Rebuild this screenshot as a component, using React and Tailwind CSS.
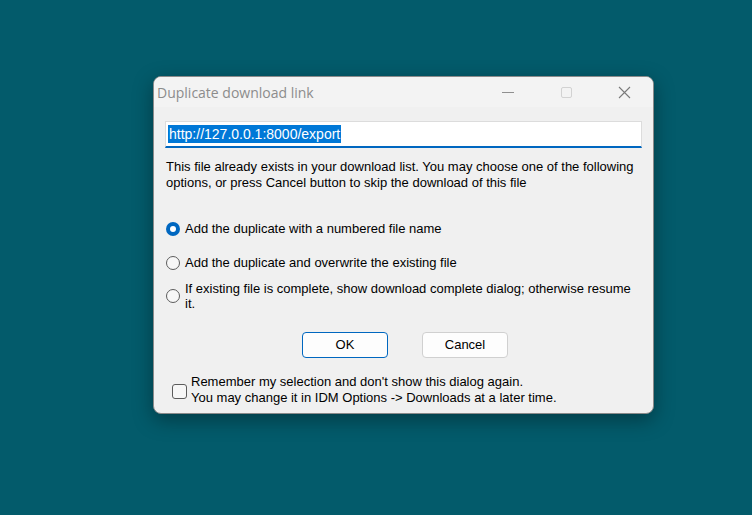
import { useState } from 'react';

const Radio = ({ checked, onClick }) => (
  <span
    onClick={onClick}
    className={
      checked
        ? "shrink-0 w-[14px] h-[14px] rounded-full bg-[#0067c0] flex items-center justify-center"
        : "shrink-0 w-[14px] h-[14px] rounded-full border border-[#5c5c5c] bg-[#f7f7f7]"
    }
  >
    {checked && <span className="w-[6px] h-[6px] rounded-full bg-white" />}
  </span>
);

const options = [
  "Add the duplicate with a numbered file name",
  "Add the duplicate and overwrite the existing file",
  "If existing file is complete, show download complete dialog; otherwise resume it.",
];

export default function App() {
  const [choice, setChoice] = useState(0);
  const [remember, setRemember] = useState(false);

  return (
    <div className="w-[752px] h-[515px] bg-[#035b6b] pt-[76px] pl-[153px] font-['Liberation_Sans',Arial,sans-serif]">
      <div className="w-[501px] h-[338px] rounded-[8px] border border-[#8a8a8a] bg-[#f0f0f0] overflow-hidden shadow-[0_6px_20px_rgba(0,0,0,0.35)] flex flex-col">
        {/* title bar */}
        <div className="h-[30px] bg-[#f3f3f3] flex items-center shrink-0">
          <span className="pl-[3px] text-[14px] text-[#8c8c8c] font-['Open_Sans',sans-serif] flex-1">
            Duplicate download link
          </span>
          <div className="flex items-center h-full">
            <div className="w-[58px] h-full flex items-center justify-center">
              <span className="w-[12px] h-px bg-[#8f8f8f]" />
            </div>
            <div className="w-[58px] h-full flex items-center justify-center">
              <span className="w-[11px] h-[11px] border border-[#d2d2d2] rounded-[2px]" />
            </div>
            <div className="w-[58px] h-full flex items-center justify-center">
              <svg width="13" height="13" viewBox="0 0 13 13">
                <path d="M1 1 L12 12 M12 1 L1 12" stroke="#7a7a7a" strokeWidth="1.1" />
              </svg>
            </div>
          </div>
        </div>

        {/* body */}
        <div className="px-[11px] pt-[14px] flex flex-col text-[13px] text-black">
          <div className="h-[27px] bg-white border border-[#dcdcdc] border-b-2 border-b-[#0067c0] flex items-center px-[2px]">
            <span className="bg-[#0078d7] text-white text-[14px] leading-[18px] px-px">
              http://127.0.0.1:8000/export
            </span>
          </div>

          <p className="mt-[11px] leading-[16px] pl-px pr-[4px]">
            This file already exists in your download list. You may choose one of the following options, or press Cancel button to skip the download of this file
          </p>

          <div className="mt-[30px] flex flex-col">
            {options.map((label, i) => (
              <label
                key={i}
                onClick={() => setChoice(i)}
                className={
                  "flex items-center gap-[5px] pl-px leading-[15px] " +
                  (i === 0 ? "" : i === 1 ? "mt-[19px]" : "mt-[11px]")
                }
              >
                <Radio checked={choice === i} />
                <span className="pr-[8px]">{label}</span>
              </label>
            ))}
          </div>

          <div className="mt-[21px] flex justify-center gap-[34px] pl-[3px]">
            <button className="w-[86px] h-[26px] rounded-[4px] border border-[#0067c0] bg-[#fdfdfd] text-[13px]">
              OK
            </button>
            <button className="w-[86px] h-[26px] rounded-[4px] border border-[#d0d0d0] bg-[#fdfdfd] text-[13px]">
              Cancel
            </button>
          </div>

          <label
            onClick={() => setRemember(!remember)}
            className="mt-[16px] pl-[7px] flex items-center gap-[4px] leading-[16px]"
          >
            <span className="shrink-0 w-[15px] h-[15px] rounded-[3px] border border-[#5c5c5c] bg-[#f7f7f7] mt-[2px]" />
            <span>
              Remember my selection and don't show this dialog again.
              <br />
              You may change it in IDM Options -&gt; Downloads at a later time.
            </span>
          </label>
        </div>
      </div>
    </div>
  );
}
